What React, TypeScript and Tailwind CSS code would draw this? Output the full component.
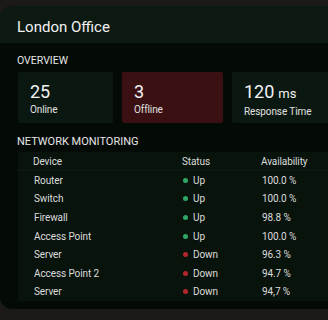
const tiles = [
  { value: '25', unit: '', label: 'Online', tone: 'bg-[#0b1811]', width: 'w-[95px]' },
  { value: '3', unit: '', label: 'Offline', tone: 'bg-[#3b1013]', width: 'w-[101px]' },
  { value: '120', unit: 'ms', label: 'Response Time', tone: 'bg-[#0b1811]', width: 'w-[110px]' },
]

const devices = [
  { name: 'Router', up: true, availability: '100.0 %' },
  { name: 'Switch', up: true, availability: '100.0 %' },
  { name: 'Firewall', up: true, availability: '98.8 %' },
  { name: 'Access Point', up: true, availability: '100.0 %' },
  { name: 'Server', up: false, availability: '96.3 %' },
  { name: 'Access Point 2', up: false, availability: '94.7 %' },
  { name: 'Server', up: false, availability: '94,7 %' },
]

export default function App() {
  return (
    <div
      className="w-[328px] h-[320px] overflow-hidden bg-[#1c1a19] pt-[6px]"
      style={{ fontFamily: 'Roboto, "Noto Sans", sans-serif' }}
    >
      <div className="w-[360px] h-[303px] rounded-l-[12px] overflow-hidden bg-[#040a06]">
        <div className="h-[37px] bg-[#0d1a12] px-[17px] pt-[5px] flex items-center">
          <h1 className="text-[15px] text-[#f2f2f2]">London Office</h1>
        </div>

        <div className="pl-[18px]">
          <div className="pt-[11px] text-[10.5px] leading-[14px] text-[#e6e6e6] -ml-px">OVERVIEW</div>

          <div className="mt-[4px] flex gap-[9px]">
            {tiles.map((tile) => (
              <div key={tile.label} className={`${tile.width} ${tile.tone} h-[51px] rounded-[2px] px-[12px] pt-[9px]`}>
                <div className="text-[18px] leading-[22px] text-[#f2f2f2]">
                  {tile.value}
                  {tile.unit && <span className="text-[13px] ml-[4px]">{tile.unit}</span>}
                </div>
                <div className="text-[10px] leading-[13px] text-[#e0e0e0] tracking-[-0.1px]">{tile.label}</div>
              </div>
            ))}
          </div>

          <div className="mt-[12px] text-[11px] leading-[14px] text-[#e6e6e6] -ml-px">NETWORK MONITORING</div>

          <div className="mt-[3px] bg-[#08130c] text-[10px] text-[#dcdcdc] tracking-[-0.1px]">
            <div className="h-[19px] grid grid-cols-[149px_79px_1fr] items-center pl-[15px] border-b border-[#0f1b14]">
              <span>Device</span>
              <span>Status</span>
              <span>Availability</span>
            </div>
            {devices.map((d, i) => (
              <div key={i} className="h-[18.6px] grid grid-cols-[149px_79px_1fr] items-center pl-[16px]">
                <span>{d.name}</span>
                <span className="flex items-center gap-[5px]">
                  <span className={`w-[5px] h-[5px] rounded-full ${d.up ? 'bg-[#2fa866]' : 'bg-[#b5262f]'}`} />
                  {d.up ? 'Up' : 'Down'}
                </span>
                <span>{d.availability}</span>
              </div>
            ))}
          </div>
        </div>
      </div>
    </div>
  )
}
